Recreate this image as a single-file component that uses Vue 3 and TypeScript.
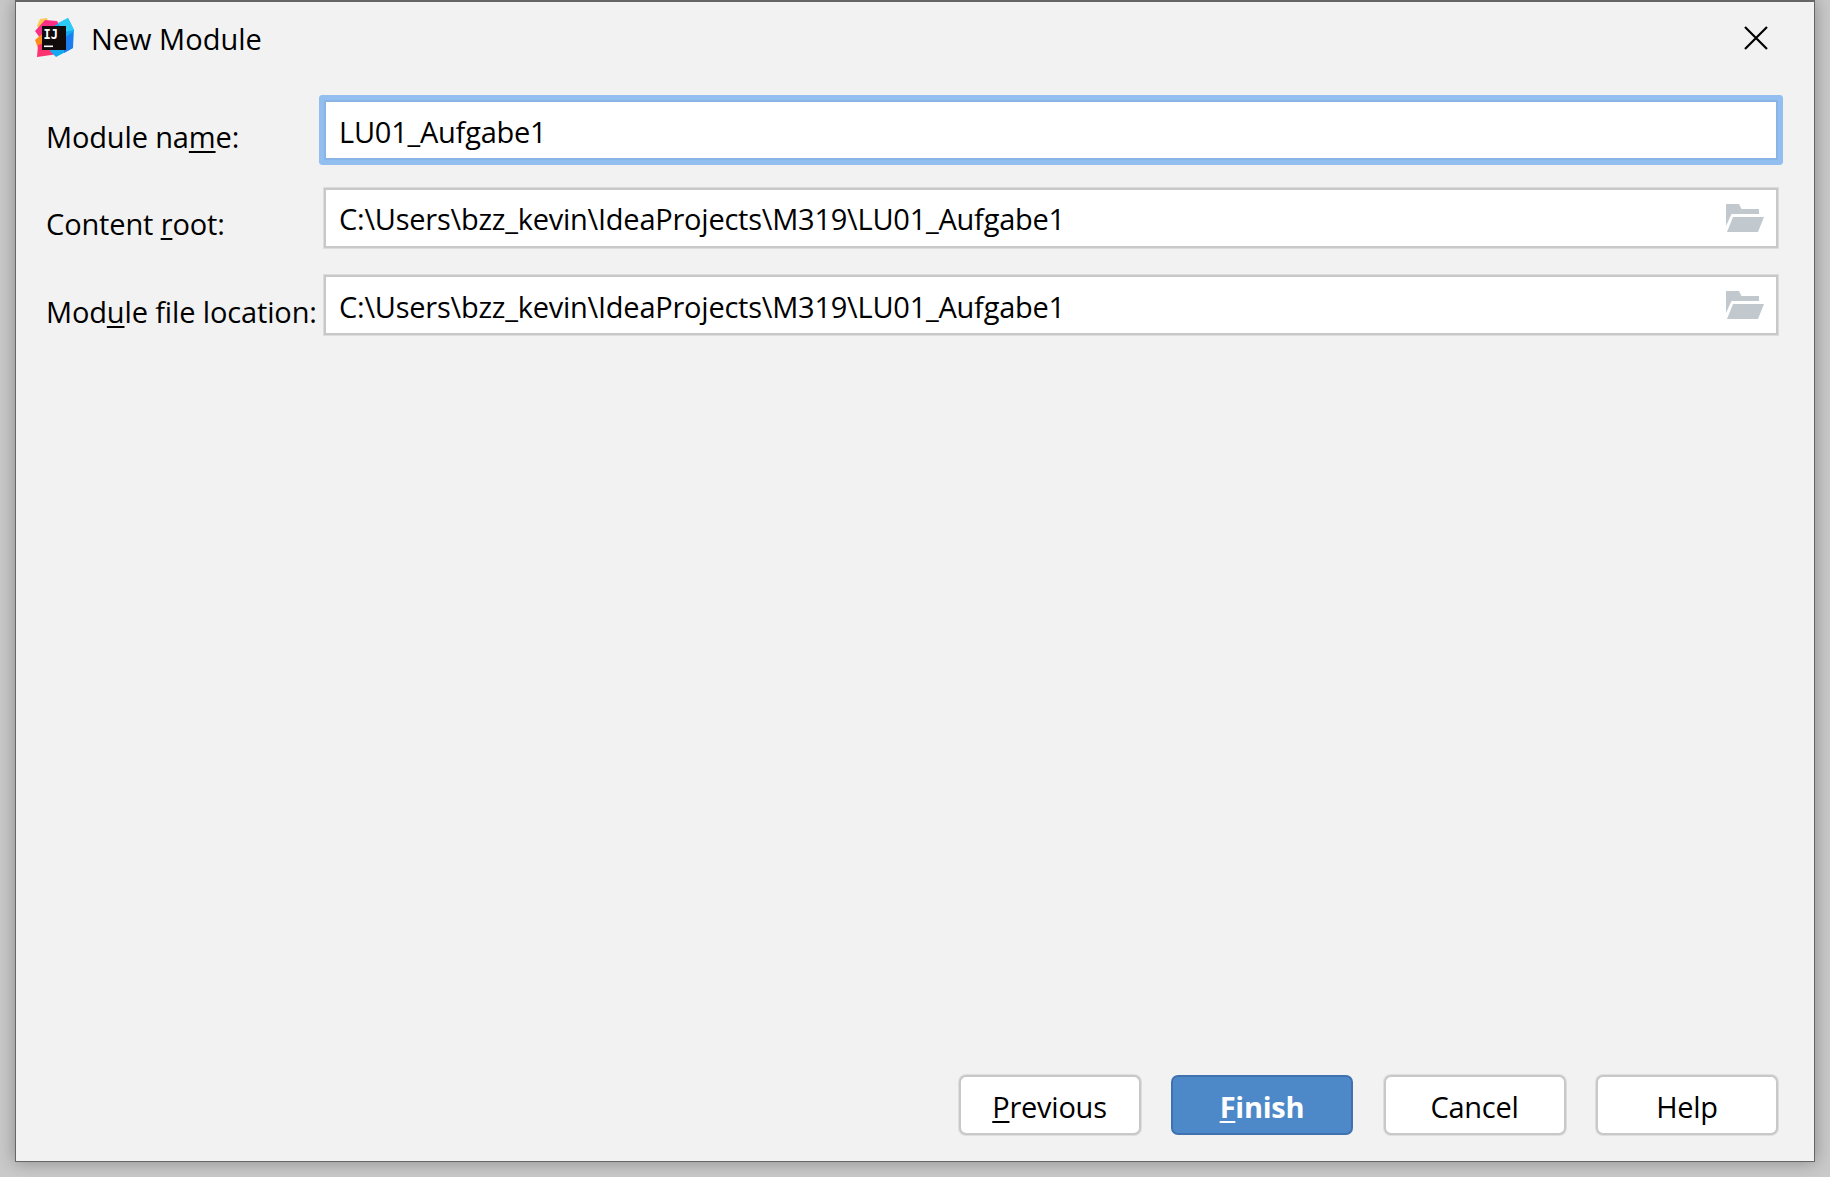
<script setup lang="ts">
interface Row {
  before: string
  key: string
  after: string
  value: string
  focused: boolean
  browse: boolean
}
interface Btn {
  before: string
  key: string
  after: string
  primary: boolean
}
const path = 'C:\\Users\\bzz_kevin\\IdeaProjects\\M319\\LU01_Aufgabe1'
const rows: Row[] = [
  { before: 'Module na', key: 'm', after: 'e:', value: 'LU01_Aufgabe1', focused: true, browse: false },
  { before: 'Content ', key: 'r', after: 'oot:', value: path, focused: false, browse: true },
  { before: 'Mod', key: 'u', after: 'le file location:', value: path, focused: false, browse: true },
]
const buttons: Btn[] = [
  { before: '', key: 'P', after: 'revious', primary: false },
  { before: '', key: 'F', after: 'inish', primary: true },
  { before: 'Cancel', key: '', after: '', primary: false },
  { before: 'Help', key: '', after: '', primary: false },
]
</script>

<template>
  <div class="dialog">
    <header class="title-bar">
      <div class="title">
        <svg class="logo" width="40" height="40" viewBox="0 0 40 40">
          <polygon points="3,8 6,1 13,0 15,8 7,15" fill="#fdc94e" />
          <polygon points="1,13 11,2 23,3 28,12 18,26 6,20" fill="#fc2f86" />
          <polygon points="1,22 8,16 13,26 4,30" fill="#ff8c1a" />
          <polygon points="4,27 20,22 24,36 3,39" fill="#fe3370" />
          <polygon points="20,8 34,0 40,12 39,30 22,39 16,33" fill="#12a9f0" />
          <polygon points="24,5 34,0 40,12 30,14" fill="#2ccbf6" />
          <polygon points="30,20 39,14 39,30 30,35" fill="#1d7df0" />
          <rect x="8" y="8" width="24" height="24" fill="#120b0b" />
          <text x="9.5" y="21" class="logo-text" textLength="14.5" lengthAdjust="spacingAndGlyphs">IJ</text>
          <rect x="10" y="27.5" width="9" height="1.6" fill="#ffffff" />
        </svg>
        <span class="title-text">New Module</span>
      </div>
      <svg class="close" width="24" height="24" viewBox="0 0 24 24">
        <path d="M1 1 L23 23 M23 1 L1 23" stroke="#000000" stroke-width="2.2" fill="none" />
      </svg>
    </header>

    <form class="form">
      <template v-for="row in rows" :key="row.before">
        <label class="label">{{ row.before }}<u>{{ row.key }}</u>{{ row.after }}</label>
        <div class="field" :class="{ focused: row.focused }">
          <span class="value">{{ row.value }}</span>
          <svg v-if="row.browse" class="folder" width="38" height="28" viewBox="0 0 38 28">
            <path d="M0 0 H13 L15.5 5 H33 V10 H5.5 L0 22 Z" fill="#c2c9ce" />
            <path d="M7 13 H38 L32 28 H1 Z" fill="#c2c9ce" />
          </svg>
        </div>
      </template>
    </form>

    <footer class="footer">
      <button
        v-for="btn in buttons"
        :key="btn.before + btn.key"
        type="button"
        class="btn"
        :class="{ primary: btn.primary }"
      ><span class="btn-text">{{ btn.before }}<u v-if="btn.key">{{ btn.key }}</u>{{ btn.after }}</span></button>
    </footer>
  </div>
</template>

<style scoped>
.dialog {
  box-sizing: border-box;
  width: 1800px;
  height: 1162px;
  margin-left: 15px;
  display: flex;
  flex-direction: column;
  background: #f2f2f2;
  border: 1px solid #666666;
  border-top-width: 2px;
  box-shadow: 0 0 16px rgba(0, 0, 0, 0.32);
  font-family: "Open Sans", "Noto Sans", sans-serif;
  font-size: 29px;
  color: #000000;
}
.title-bar {
  height: 72px;
  display: flex;
  align-items: center;
  justify-content: space-between;
  padding: 0 46px 0 18px;
}
.title {
  display: flex;
  align-items: center;
  gap: 17px;
}
.logo {
  display: block;
}
.logo-text {
  font-family: "DejaVu Sans Mono", monospace;
  font-size: 14px;
  font-weight: 700;
  fill: #ffffff;
}
.title-text {
  line-height: 40px;
  padding-top: 2px;
}
.close {
  display: block;
}
.form {
  margin-top: 26px;
  padding: 0 36px 0 30px;
  display: grid;
  grid-template-columns: 278px 1fr;
  grid-auto-rows: 60px;
  row-gap: 27.5px;
}
.label {
  display: flex;
  align-items: center;
  white-space: pre;
  padding-top: 13px;
  line-height: 40px;
  letter-spacing: -0.14px;
}
.label u {
  text-underline-offset: 3px;
  text-decoration-thickness: 2px;
  text-decoration-skip-ink: none;
}
.field {
  box-sizing: border-box;
  display: flex;
  align-items: center;
  justify-content: space-between;
  padding: 0 12px 0 13px;
  background: #ffffff;
  border: 2px solid #c8c8c8;
  box-shadow: 0 0 0 1px #dcdcdc;
}
.field.focused {
  border-color: #8ab4e6;
  border-radius: 1px;
  box-shadow: 0 0 0 5px #92bff0;
}
.value {
  line-height: 40px;
  padding-top: 3px;
  letter-spacing: -0.235px;
}
.folder {
  display: block;
  flex: none;
}
.footer {
  margin-top: auto;
  padding: 0 36px 26px 0;
  display: flex;
  justify-content: flex-end;
  gap: 30.5px;
}
.btn {
  box-sizing: border-box;
  width: 182px;
  height: 60px;
  padding: 2px 0 0;
  background: #ffffff;
  border: 2px solid #c8c8c8;
  border-radius: 7px;
  box-shadow: 0 0 0 1px #dedede;
  font: inherit;
  color: #000000;
}
.btn-text {
  letter-spacing: -0.25px;
}
.btn u {
  text-underline-offset: 3px;
  text-decoration-thickness: 2px;
  text-decoration-skip-ink: none;
}
.btn.primary {
  background: #4d89c9;
  border-color: #3f72ae;
  box-shadow: none;
  color: #ffffff;
  font-weight: 700;
}
</style>

<style>
html,
body {
  margin: 0;
  height: 100%;
  overflow: hidden;
  background: #c9c9c9;
}
</style>
